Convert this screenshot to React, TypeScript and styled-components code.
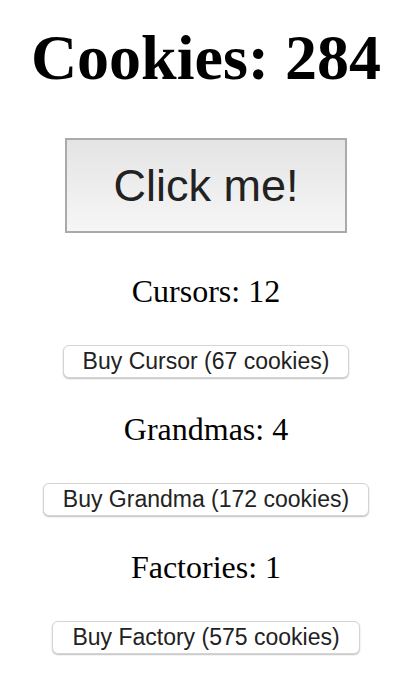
import React, { useState } from 'react'
import styled, { createGlobalStyle } from 'styled-components'

const GlobalStyle = createGlobalStyle`
  body {
    margin: 0;
    background: #ffffff;
    font-family: "Liberation Serif", "Times New Roman", serif;
  }
`

type Building = {
  name: string
  plural: string
  count: number
  cost: number
}

const initialBuildings: Building[] = [
  { name: 'Cursor', plural: 'Cursors', count: 12, cost: 67 },
  { name: 'Grandma', plural: 'Grandmas', count: 4, cost: 172 },
  { name: 'Factory', plural: 'Factories', count: 1, cost: 575 },
]

const App: React.FC = () => {
  const [cookies, setCookies] = useState(284)
  const [buildings, setBuildings] = useState(initialBuildings)

  const buy = (index: number) => {
    const b = buildings[index]
    if (cookies < b.cost) return
    setCookies(cookies - b.cost)
    setBuildings(buildings.map((x, i) => (i === index ? { ...x, count: x.count + 1 } : x)))
  }

  return (
    <Page>
      <GlobalStyle />
      <Title>Cookies: {cookies}</Title>
      <ClickButton onClick={() => setCookies(cookies + 1)}>Click me!</ClickButton>
      <List>
        {buildings.map((b, i) => (
          <Section key={b.name}>
            <Count>
              {b.plural}: {b.count}
            </Count>
            <BuyButton onClick={() => buy(i)}>
              Buy {b.name} ({b.cost} cookies)
            </BuyButton>
          </Section>
        ))}
      </List>
    </Page>
  )
}
export default App

const Page = styled.main`
  display: flex;
  flex-direction: column;
  align-items: center;
  padding-top: 26px;
`

const Title = styled.h1`
  margin: 0;
  font-family: "Liberation Serif", "Times New Roman", serif;
  font-weight: bold;
  font-size: 64px;
  line-height: 64px;
  color: #000;
`

const ClickButton = styled.button`
  margin-top: 48px;
  height: 95px;
  padding: 0 46px;
  border: 2px solid #aaaaaa;
  border-radius: 0;
  background: linear-gradient(to bottom, #e4e4e4, #f6f6f6);
  font-family: "Liberation Sans", Arial, sans-serif;
  font-size: 45px;
  color: #222222;
  cursor: pointer;
`

const List = styled.div`
  display: flex;
  flex-direction: column;
  align-items: center;
  margin-top: 42px;
`

const Section = styled.section`
  display: flex;
  flex-direction: column;
  align-items: center;
  padding-bottom: 35px;
`

const Count = styled.p`
  margin: 0 0 38px;
  font-size: 32px;
  line-height: 32px;
  color: #000;
`

const BuyButton = styled.button`
  height: 33px;
  padding: 0 19px;
  border: 1px solid #d4d4d4;
  border-radius: 6px;
  background: #ffffff;
  box-shadow: 0 1px 1.5px rgba(0, 0, 0, 0.25);
  font-family: "Liberation Sans", Arial, sans-serif;
  font-size: 23px;
  line-height: 31px;
  color: #222222;
  cursor: pointer;
`
